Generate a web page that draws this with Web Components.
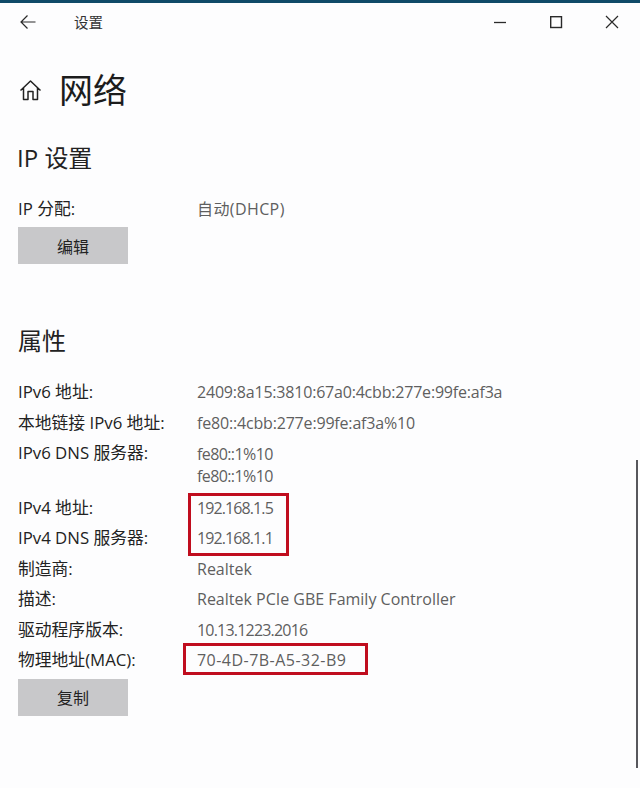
<!DOCTYPE html>
<html lang="zh"><head><meta charset="utf-8">
<style>
html,body{margin:0;padding:0;height:100%;background:#fdfdfe}
body{font-family:"Open Sans","Noto Sans CJK SC",sans-serif;color:#222}
</style></head><body>
<settings-page></settings-page>
<script>
const FONT='"Open Sans","Noto Sans CJK SC",sans-serif';
customElements.define('title-bar',class extends HTMLElement{constructor(){super();this.attachShadow({mode:'open'}).innerHTML=`
<style>:host{display:flex;align-items:center;height:37px;border-top:3px solid #0f4a68;box-sizing:content-box;background:#fdfdfe;padding:0 21px 0 20px;font-size:14.500px;color:#333}
svg{display:block;fill:none;stroke:#2a2a2a}
.t{margin-left:38px;flex:1}
.w{display:flex;gap:42px;align-items:center}</style>
<svg width="16" height="16" viewBox="0 0 16 16" stroke-width="1.2"><path d="M15.5 8H1M7.5 1.5 1 8l6.5 6.5"/></svg>
<span class="t"><slot></slot></span>
<div class="w">
<svg width="14" height="14" viewBox="0 0 14 14" stroke-width="1.3"><path d="M1 7.5h12"/></svg>
<svg width="14" height="14" viewBox="0 0 14 14" stroke-width="1.4"><rect x="1.7" y="1.7" width="10.8" height="10.8"/></svg>
<svg width="14" height="14" viewBox="0 0 14 14" stroke-width="1.2"><path d="M1 1l12 12M13 1 1 13"/></svg>
</div>`}});
customElements.define('page-head',class extends HTMLElement{constructor(){super();this.attachShadow({mode:'open'}).innerHTML=`
<style>:host{display:flex;align-items:center;gap:18px;height:60px;margin-top:20px;font-size:34px;line-height:60px;color:#1c1c1c}
svg{display:block;fill:none;stroke:#222;stroke-width:1.5;stroke-linejoin:round;margin-left:1px;margin-right:-1px}</style>
<svg width="23" height="23" viewBox="0 0 23 23"><path d="M1.5 11.5 11.5 2l10 9.500M4.500 9v11.500h4.500v-8h5v8h4.500V9"/></svg>
<span><slot></slot></span>`}});
customElements.define('section-title',class extends HTMLElement{constructor(){super();this.attachShadow({mode:'open'}).innerHTML=`
<style>:host{display:block;font-size:24px;line-height:36px;color:#222}</style><slot></slot>`}});
customElements.define('prop-row',class extends HTMLElement{constructor(){super();this.attachShadow({mode:'open'}).innerHTML=`
<style>:host{display:grid;grid-template-columns:179px 1fr;font-size:16px;line-height:24px;padding-bottom:6.500px;color:#222}
.k{font-size:16.800px;white-space:nowrap}
.v{color:#5f5f5f}</style>
<div class="k"><slot name="k"></slot></div><div class="v"><slot></slot></div>`}});
customElements.define('gray-button',class extends HTMLElement{constructor(){super();this.attachShadow({mode:'open'}).innerHTML=`
<style>:host{display:flex;align-items:center;justify-content:center;width:110px;height:37px;background:#c8c8ca;font-size:16px;color:#222}</style><slot></slot>`}});
customElements.define('red-mark',class extends HTMLElement{constructor(){super();this.attachShadow({mode:'open'}).innerHTML=`
<style>:host{position:absolute;box-sizing:border-box;border:3px solid #c00d1e;display:block}</style>`}});
const sp=(t,l)=>`<span style="letter-spacing:${l}px">${t}</span>`;
const rows=[
['IPv6 地址:',sp('2409:8a15:3810:67a0:4cbb:277e:99fe:af3a',-0.2)],
['本地链接 IPv6 地址:',sp('fe80::4cbb:277e:99fe:af3a%10',-0.18)],
['IPv6 DNS 服务器:',`<span style="display:block;padding:2px 0;line-height:22px;letter-spacing:-.6px">fe80::1%10<br>fe80::1%10</span>`],
['IPv4 地址:',sp('192.168.1.5',-0.9)],
['IPv4 DNS 服务器:',sp('192.168.1.1',-0.9)],
['制造商:','Realtek'],
['描述:','Realtek PCIe GBE Family Controller'],
['驱动程序版本:',sp('10.13.1223.2016',-0.8)],
['物理地址(MAC):',sp('70-4D-7B-A5-32-B9',0.47)]];
customElements.define('settings-page',class extends HTMLElement{constructor(){super();this.attachShadow({mode:'open'}).innerHTML=`
<style>:host{display:block;position:relative;width:640px;height:788px;overflow:hidden;font-family:${FONT};background:#fdfdfe}
main{display:flex;flex-direction:column;padding:0 18px}
.sb{position:absolute;left:636px;top:460px;width:2px;height:308px;background:#57575c}
red-mark.a{left:188px;top:493px;width:101px;height:63px}
red-mark.b{left:183px;top:643px;width:185px;height:32px}
</style>
<title-bar>设置</title-bar>
<main>
<page-head>网络</page-head>
<section-title style="margin-top:20px;margin-left:-1px">IP 设置</section-title>
<prop-row style="margin-top:21px;padding-bottom:0"><span slot="k">IP 分配:</span>${sp('自动(DHCP)',0.4)}</prop-row>
<gray-button style="margin-top:6px">编辑</gray-button>
<section-title style="margin-top:59px">属性</section-title>
<div style="margin-top:21px">${rows.map(r=>`<prop-row><span slot="k">${r[0]}</span>${r[1]}</prop-row>`).join('')}</div>
<gray-button>复制</gray-button>
</main>
<div class="sb"></div>
<red-mark class="a"></red-mark><red-mark class="b"></red-mark>`}});
</script></body></html>
